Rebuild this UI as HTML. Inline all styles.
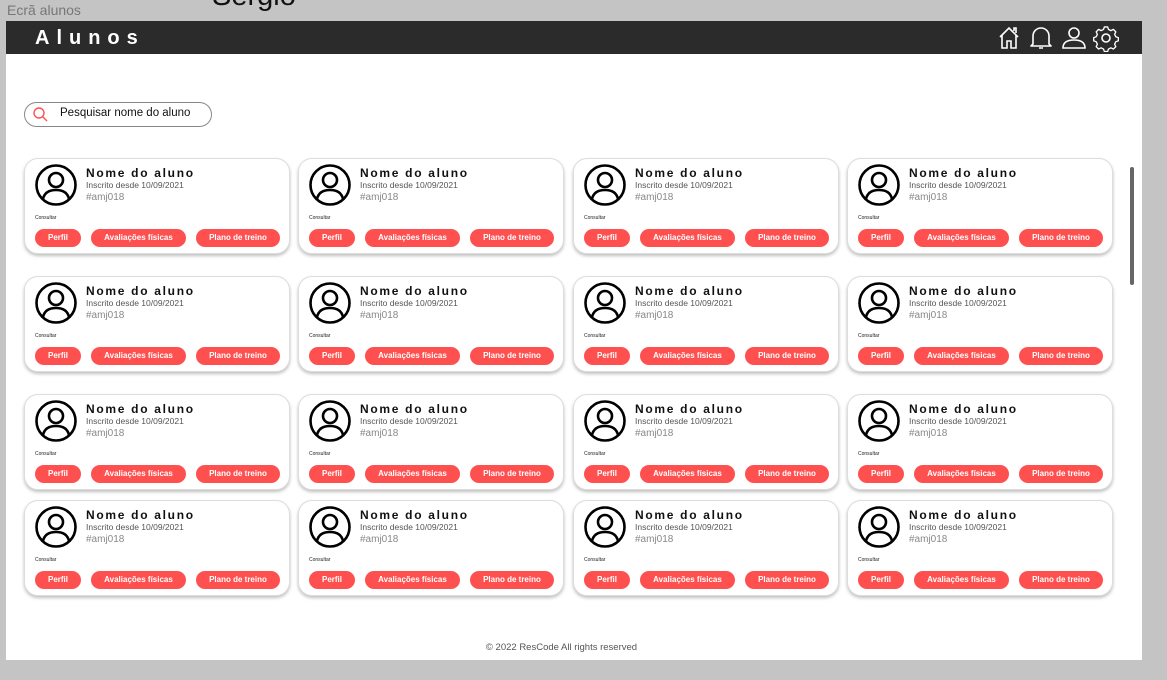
<!DOCTYPE html>
<html><head><meta charset="utf-8">
<style>
*{margin:0;padding:0;box-sizing:border-box}
body{width:1167px;height:680px;background:#c4c4c4;position:relative;overflow:hidden;font-family:"Liberation Sans",Arial,sans-serif}
.a{position:absolute}
#frame{left:6px;top:21px;width:1136px;height:639px;background:#fff}
#hdr{left:6px;top:21px;width:1136px;height:33px;background:#2b2b2b}
.card{position:absolute;width:266px;height:96px;border:1px solid #ddd;border-radius:14px;background:#fff;box-shadow:0 2px 3px rgba(0,0,0,.25)}
.card svg{position:absolute;left:10px;top:5px}
.nm{position:absolute;left:61px;top:7px;font-size:12px;font-weight:bold;letter-spacing:1.7px;color:#111}
.ins{position:absolute;left:61px;top:21px;font-size:8.5px;color:#555}
.id{position:absolute;left:61px;top:33px;font-size:10px;color:#888}
.con{position:absolute;left:10px;top:56px;font-size:5px;color:#222}
.b{position:absolute;top:70px;height:18px;border-radius:9px;background:#ff5050;color:#fff;font-size:8px;font-weight:bold;text-align:center;line-height:18px}
.b1{left:10px;width:46px}.b2{left:66px;width:95px}.b3{left:171px;width:84px}
</style></head><body>
<div class="a" style="left:7px;top:2px;font-size:14px;color:#777">Ecrã alunos</div>
<div class="a" style="left:212px;top:-20px;font-size:29px;color:#111">Sergio</div>
<div id="frame" class="a"></div>
<div id="hdr" class="a"></div>
<div class="a" style="left:35px;top:27px;font-size:20px;font-weight:bold;color:#fff;letter-spacing:7px">Alunos</div>
<svg class="a" style="left:995px;top:24px" width="130" height="28" viewBox="0 0 130 28" fill="none" stroke="#fff" stroke-width="1.6">
<path d="M5 13 L14 4 L23 13 M7 11 V24 H12 V17 H16 V24 H21 V11 M19 7 V4 H21 V9"/>
<path d="M38 20 V12 A8 8 0 0 1 54 12 V20 L56 22 H36 Z M44 24 H48" stroke-linejoin="round"/>
<circle cx="79" cy="9" r="5"/><path d="M68 24 Q68 16 79 16 Q90 16 90 24 Z"/>
<circle cx="111" cy="14" r="4"/>
<path d="M109 3h4l1 3 3 1.5 3-1.5 3 3-1.5 3 1.5 3 3 1v4l-3 1-1.5 3 1.5 3-3 3-3-1.5-3 1.5-1 3h-4l-1-3-3-1.5-3 1.5-3-3 1.5-3-1.5-3-3-1v-4l3-1 1.5-3-1.5-3 3-3 3 1.5 3-1.5z" transform="translate(111 14) scale(.82) translate(-111 -14) translate(0 -2.5)" stroke-linejoin="round"/>
</svg>
<div class="a" style="left:24px;top:102px;width:188px;height:25px;border:1px solid #888;border-radius:13px"></div>
<svg class="a" style="left:32px;top:106px" width="18" height="18" fill="none" stroke="#ff5050" stroke-width="1.4"><circle cx="7" cy="7" r="5"/><path d="M10.5 10.5 L15 15"/></svg>
<div class="a" style="left:60px;top:107px;font-size:11.5px;color:#111">Pesquisar nome do aluno</div>
<div class="a" style="left:1130px;top:167px;width:4px;height:118px;background:#666;border-radius:2px"></div>
<div class="a" style="left:0;width:1123px;top:642px;text-align:center;font-size:9.5px;color:#555">© 2022 ResCode All rights reserved</div>

<div class="card" style="left:24px;top:158px"><svg width="42" height="42" viewBox="0 0 42 42" fill="none" stroke="#000" stroke-width="2.6"><circle cx="21" cy="21" r="19.5"/><circle cx="21" cy="16" r="7"/><path d="M8 35 Q10 26 21 26 Q32 26 34 35"/></svg><div class="nm">Nome do aluno</div><div class="ins">Inscrito desde 10/09/2021</div><div class="id">#amj018</div><div class="con">Consultar</div><div class="b b1">Perfil</div><div class="b b2">Avaliações físicas</div><div class="b b3">Plano de treino</div></div>
<div class="card" style="left:298px;top:158px"><svg width="42" height="42" viewBox="0 0 42 42" fill="none" stroke="#000" stroke-width="2.6"><circle cx="21" cy="21" r="19.5"/><circle cx="21" cy="16" r="7"/><path d="M8 35 Q10 26 21 26 Q32 26 34 35"/></svg><div class="nm">Nome do aluno</div><div class="ins">Inscrito desde 10/09/2021</div><div class="id">#amj018</div><div class="con">Consultar</div><div class="b b1">Perfil</div><div class="b b2">Avaliações físicas</div><div class="b b3">Plano de treino</div></div>
<div class="card" style="left:573px;top:158px"><svg width="42" height="42" viewBox="0 0 42 42" fill="none" stroke="#000" stroke-width="2.6"><circle cx="21" cy="21" r="19.5"/><circle cx="21" cy="16" r="7"/><path d="M8 35 Q10 26 21 26 Q32 26 34 35"/></svg><div class="nm">Nome do aluno</div><div class="ins">Inscrito desde 10/09/2021</div><div class="id">#amj018</div><div class="con">Consultar</div><div class="b b1">Perfil</div><div class="b b2">Avaliações físicas</div><div class="b b3">Plano de treino</div></div>
<div class="card" style="left:847px;top:158px"><svg width="42" height="42" viewBox="0 0 42 42" fill="none" stroke="#000" stroke-width="2.6"><circle cx="21" cy="21" r="19.5"/><circle cx="21" cy="16" r="7"/><path d="M8 35 Q10 26 21 26 Q32 26 34 35"/></svg><div class="nm">Nome do aluno</div><div class="ins">Inscrito desde 10/09/2021</div><div class="id">#amj018</div><div class="con">Consultar</div><div class="b b1">Perfil</div><div class="b b2">Avaliações físicas</div><div class="b b3">Plano de treino</div></div>

<div class="card" style="left:24px;top:276px"><svg width="42" height="42" viewBox="0 0 42 42" fill="none" stroke="#000" stroke-width="2.6"><circle cx="21" cy="21" r="19.5"/><circle cx="21" cy="16" r="7"/><path d="M8 35 Q10 26 21 26 Q32 26 34 35"/></svg><div class="nm">Nome do aluno</div><div class="ins">Inscrito desde 10/09/2021</div><div class="id">#amj018</div><div class="con">Consultar</div><div class="b b1">Perfil</div><div class="b b2">Avaliações físicas</div><div class="b b3">Plano de treino</div></div>
<div class="card" style="left:298px;top:276px"><svg width="42" height="42" viewBox="0 0 42 42" fill="none" stroke="#000" stroke-width="2.6"><circle cx="21" cy="21" r="19.5"/><circle cx="21" cy="16" r="7"/><path d="M8 35 Q10 26 21 26 Q32 26 34 35"/></svg><div class="nm">Nome do aluno</div><div class="ins">Inscrito desde 10/09/2021</div><div class="id">#amj018</div><div class="con">Consultar</div><div class="b b1">Perfil</div><div class="b b2">Avaliações físicas</div><div class="b b3">Plano de treino</div></div>
<div class="card" style="left:573px;top:276px"><svg width="42" height="42" viewBox="0 0 42 42" fill="none" stroke="#000" stroke-width="2.6"><circle cx="21" cy="21" r="19.5"/><circle cx="21" cy="16" r="7"/><path d="M8 35 Q10 26 21 26 Q32 26 34 35"/></svg><div class="nm">Nome do aluno</div><div class="ins">Inscrito desde 10/09/2021</div><div class="id">#amj018</div><div class="con">Consultar</div><div class="b b1">Perfil</div><div class="b b2">Avaliações físicas</div><div class="b b3">Plano de treino</div></div>
<div class="card" style="left:847px;top:276px"><svg width="42" height="42" viewBox="0 0 42 42" fill="none" stroke="#000" stroke-width="2.6"><circle cx="21" cy="21" r="19.5"/><circle cx="21" cy="16" r="7"/><path d="M8 35 Q10 26 21 26 Q32 26 34 35"/></svg><div class="nm">Nome do aluno</div><div class="ins">Inscrito desde 10/09/2021</div><div class="id">#amj018</div><div class="con">Consultar</div><div class="b b1">Perfil</div><div class="b b2">Avaliações físicas</div><div class="b b3">Plano de treino</div></div>

<div class="card" style="left:24px;top:394px"><svg width="42" height="42" viewBox="0 0 42 42" fill="none" stroke="#000" stroke-width="2.6"><circle cx="21" cy="21" r="19.5"/><circle cx="21" cy="16" r="7"/><path d="M8 35 Q10 26 21 26 Q32 26 34 35"/></svg><div class="nm">Nome do aluno</div><div class="ins">Inscrito desde 10/09/2021</div><div class="id">#amj018</div><div class="con">Consultar</div><div class="b b1">Perfil</div><div class="b b2">Avaliações físicas</div><div class="b b3">Plano de treino</div></div>
<div class="card" style="left:298px;top:394px"><svg width="42" height="42" viewBox="0 0 42 42" fill="none" stroke="#000" stroke-width="2.6"><circle cx="21" cy="21" r="19.5"/><circle cx="21" cy="16" r="7"/><path d="M8 35 Q10 26 21 26 Q32 26 34 35"/></svg><div class="nm">Nome do aluno</div><div class="ins">Inscrito desde 10/09/2021</div><div class="id">#amj018</div><div class="con">Consultar</div><div class="b b1">Perfil</div><div class="b b2">Avaliações físicas</div><div class="b b3">Plano de treino</div></div>
<div class="card" style="left:573px;top:394px"><svg width="42" height="42" viewBox="0 0 42 42" fill="none" stroke="#000" stroke-width="2.6"><circle cx="21" cy="21" r="19.5"/><circle cx="21" cy="16" r="7"/><path d="M8 35 Q10 26 21 26 Q32 26 34 35"/></svg><div class="nm">Nome do aluno</div><div class="ins">Inscrito desde 10/09/2021</div><div class="id">#amj018</div><div class="con">Consultar</div><div class="b b1">Perfil</div><div class="b b2">Avaliações físicas</div><div class="b b3">Plano de treino</div></div>
<div class="card" style="left:847px;top:394px"><svg width="42" height="42" viewBox="0 0 42 42" fill="none" stroke="#000" stroke-width="2.6"><circle cx="21" cy="21" r="19.5"/><circle cx="21" cy="16" r="7"/><path d="M8 35 Q10 26 21 26 Q32 26 34 35"/></svg><div class="nm">Nome do aluno</div><div class="ins">Inscrito desde 10/09/2021</div><div class="id">#amj018</div><div class="con">Consultar</div><div class="b b1">Perfil</div><div class="b b2">Avaliações físicas</div><div class="b b3">Plano de treino</div></div>

<div class="card" style="left:24px;top:500px"><svg width="42" height="42" viewBox="0 0 42 42" fill="none" stroke="#000" stroke-width="2.6"><circle cx="21" cy="21" r="19.5"/><circle cx="21" cy="16" r="7"/><path d="M8 35 Q10 26 21 26 Q32 26 34 35"/></svg><div class="nm">Nome do aluno</div><div class="ins">Inscrito desde 10/09/2021</div><div class="id">#amj018</div><div class="con">Consultar</div><div class="b b1">Perfil</div><div class="b b2">Avaliações físicas</div><div class="b b3">Plano de treino</div></div>
<div class="card" style="left:298px;top:500px"><svg width="42" height="42" viewBox="0 0 42 42" fill="none" stroke="#000" stroke-width="2.6"><circle cx="21" cy="21" r="19.5"/><circle cx="21" cy="16" r="7"/><path d="M8 35 Q10 26 21 26 Q32 26 34 35"/></svg><div class="nm">Nome do aluno</div><div class="ins">Inscrito desde 10/09/2021</div><div class="id">#amj018</div><div class="con">Consultar</div><div class="b b1">Perfil</div><div class="b b2">Avaliações físicas</div><div class="b b3">Plano de treino</div></div>
<div class="card" style="left:573px;top:500px"><svg width="42" height="42" viewBox="0 0 42 42" fill="none" stroke="#000" stroke-width="2.6"><circle cx="21" cy="21" r="19.5"/><circle cx="21" cy="16" r="7"/><path d="M8 35 Q10 26 21 26 Q32 26 34 35"/></svg><div class="nm">Nome do aluno</div><div class="ins">Inscrito desde 10/09/2021</div><div class="id">#amj018</div><div class="con">Consultar</div><div class="b b1">Perfil</div><div class="b b2">Avaliações físicas</div><div class="b b3">Plano de treino</div></div>
<div class="card" style="left:847px;top:500px"><svg width="42" height="42" viewBox="0 0 42 42" fill="none" stroke="#000" stroke-width="2.6"><circle cx="21" cy="21" r="19.5"/><circle cx="21" cy="16" r="7"/><path d="M8 35 Q10 26 21 26 Q32 26 34 35"/></svg><div class="nm">Nome do aluno</div><div class="ins">Inscrito desde 10/09/2021</div><div class="id">#amj018</div><div class="con">Consultar</div><div class="b b1">Perfil</div><div class="b b2">Avaliações físicas</div><div class="b b3">Plano de treino</div></div>
</body></html>
